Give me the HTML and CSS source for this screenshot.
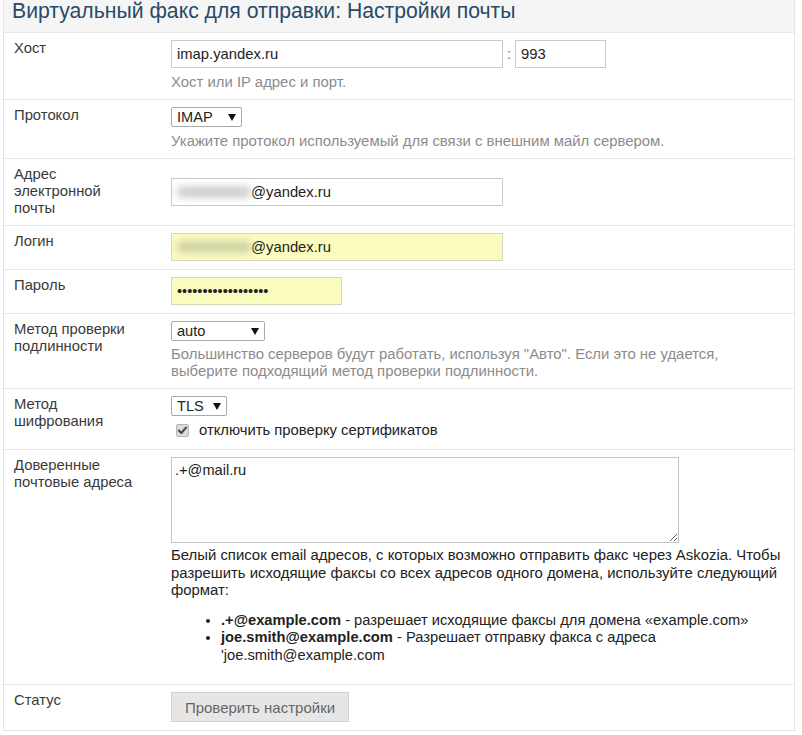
FILE: index.html
```html
<!DOCTYPE html>
<html lang="ru">
<head>
<meta charset="utf-8">
<title>Настройки почты</title>
<link rel="stylesheet" href="styles.css">
</head>
<body>
<div class="panel">
  <h2 class="panel-title">Виртуальный факс для отправки: Настройки почты</h2>

  <div class="row">
    <div class="label">Хост</div>
    <div class="field">
      <div class="inline">
        <input class="text host" type="text" value="imap.yandex.ru">
        <span class="colon">:</span>
        <input class="text port" type="text" value="993">
      </div>
      <div class="help">Хост или IP адрес и порт.</div>
    </div>
  </div>

  <div class="row">
    <div class="label">Протокол</div>
    <div class="field">
      <span class="select sel-imap"><select><option>IMAP</option></select></span>
      <div class="help">Укажите протокол используемый для связи с внешним майл сервером.</div>
    </div>
  </div>

  <div class="row">
    <div class="label">Адрес электронной почты</div>
    <div class="field">
      <div class="text fake host"><span class="blur" aria-hidden="true"></span>@yandex.ru</div>
    </div>
  </div>

  <div class="row">
    <div class="label">Логин</div>
    <div class="field">
      <div class="text fake host autofill"><span class="blur" aria-hidden="true"></span>@yandex.ru</div>
    </div>
  </div>

  <div class="row">
    <div class="label">Пароль</div>
    <div class="field">
      <input class="text pass autofill" type="password" value="abcdefghijklmnopqr">
    </div>
  </div>

  <div class="row">
    <div class="label">Метод проверки подлинности</div>
    <div class="field">
      <span class="select sel-auto"><select><option>auto</option></select></span>
      <div class="help tight">Большинство серверов будут работать, используя "Авто". Если это не удается, выберите подходящий метод проверки подлинности.</div>
    </div>
  </div>

  <div class="row">
    <div class="label">Метод шифрования</div>
    <div class="field">
      <span class="select sel-tls"><select><option>TLS</option></select></span>
      <label class="check">
        <span class="box"><svg width="11" height="11" viewBox="0 0 11 11"><path d="M2 5.6 L4.4 8 L9 2.6" fill="none" stroke="#4a4a4a" stroke-width="2.2" stroke-linecap="round" stroke-linejoin="round"/></svg></span>
        отключить проверку сертификатов
      </label>
    </div>
  </div>

  <div class="row">
    <div class="label">Доверенные почтовые адреса</div>
    <div class="field">
      <textarea class="area">.+@mail.ru</textarea>
      <div class="note">Белый список email адресов, с которых возможно отправить факс через Askozia. Чтобы разрешить исходящие факсы со всех адресов одного домена, используйте следующий формат:</div>
      <ul class="formats">
        <li><b>.+@example.com</b> - разрешает исходящие факсы для домена «example.com»</li>
        <li><b>joe.smith@example.com</b> - Разрешает отправку факса с адреса 'joe.smith@example.com</li>
      </ul>
    </div>
  </div>

  <div class="row">
    <div class="label">Статус</div>
    <div class="field">
      <button class="btn" type="button">Проверить настройки</button>
    </div>
  </div>
</div>
</body>
</html>
```

FILE: styles.css
```css
html, body {
  margin: 0;
  padding: 0;
  background: #fff;
}

body {
  font-family: "Liberation Sans", Arial, sans-serif;
  font-size: 14.8px;
  color: #333;
}

.panel {
  width: 790px;
  margin-left: 3px;
  border: 1px solid #e4e4e4;
  border-top: none;
}

.panel-title {
  margin: 0;
  height: 32px;
  box-sizing: border-box;
  padding: 0 0 0 8px;
  background: #f5f5f5;
  font-weight: normal;
  font-size: 21.2px;
  line-height: 22px;
  color: #284a68;
}

.row {
  display: grid;
  grid-template-columns: 167px 1fr;
  border-top: 1px solid #e8e8e8;
}

.label {
  padding: 7px 32px 8px 10px;
  line-height: 17px;
  color: #3a3a3a;
}

.field {
  padding: 7px 10px 8px 0;
  align-self: center;
  line-height: 18px;
}

.inline {
  display: flex;
  align-items: center;
}

.text {
  box-sizing: border-box;
  height: 28px;
  border: 1px solid #cacaca;
  background: #fff;
  font-family: "Liberation Sans", Arial, sans-serif;
  font-size: 14.8px;
  color: #222;
  padding: 0 5px;
  margin: 0;
  outline: none;
  border-radius: 0;
}

.host { width: 332px; }
.port { width: 91px; }
.pass { width: 171px; font-size: 14.5px; }

.fake {
  display: flex;
  align-items: center;
}

.autofill {
  background: #fafbbf;
  border-color: #d6d6c0;
}

.blur {
  display: block;
  width: 74px;
  height: 12px;
  background: #d0d0d0;
  filter: blur(3.5px);
  border-radius: 5px;
}

.autofill .blur {
  background: #d2d3a6;
}

.colon {
  width: 12px;
  text-align: center;
  color: #777;
}

.help {
  margin-top: 5px;
  color: #8c8c8c;
  font-size: 14.9px;
  line-height: 18px;
}

.help.tight {
  line-height: 17px;
}

.select {
  position: relative;
  display: inline-block;
  vertical-align: top;
}

.select select {
  appearance: none;
  -webkit-appearance: none;
  box-sizing: border-box;
  height: 20px;
  border: 1px solid #a9a9a9;
  border-radius: 2px;
  background: #fff;
  font-family: "Liberation Sans", Arial, sans-serif;
  font-size: 14.6px;
  color: #222;
  padding: 0 0 0 5px;
  margin: 0;
  display: block;
}

.select::after {
  content: "";
  position: absolute;
  top: 7px;
  width: 0;
  height: 0;
  border-left: 4px solid transparent;
  border-right: 4px solid transparent;
  border-top: 7px solid #111;
  pointer-events: none;
}

.sel-imap select { width: 71px; }
.sel-imap::after { left: 57px; }
.sel-auto select { width: 94px; }
.sel-auto::after { left: 80px; }
.sel-tls select { width: 56px; }
.sel-tls::after { left: 42px; }

.check {
  display: flex;
  align-items: center;
  height: 22px;
  margin-top: 3px;
  padding-left: 5px;
  color: #222;
  font-size: 14.8px;
}

.box {
  box-sizing: border-box;
  width: 13px;
  height: 13px;
  border: 1px solid #b4b4b4;
  border-radius: 2px;
  background: #dcdcdc;
  margin-right: 10px;
  display: flex;
  align-items: center;
  justify-content: center;
}

.area {
  display: block;
  box-sizing: border-box;
  width: 508px;
  height: 86px;
  border: 1px solid #c4c4c4;
  font-family: "Liberation Sans", Arial, sans-serif;
  font-size: 14.6px;
  color: #222;
  padding: 4px 3px;
  margin: 0;
  outline: none;
}

.note {
  margin-top: 4px;
  font-size: 14.9px;
  line-height: 17.5px;
  color: #222;
}

.formats {
  margin: 12px 0;
  padding-left: 50px;
  font-size: 14.7px;
  line-height: 17.5px;
  color: #222;
}

.btn {
  box-sizing: border-box;
  height: 30px;
  width: 178px;
  border: 1px solid #d2d2d2;
  border-radius: 0;
  background: #e6e6e6;
  font-family: "Liberation Sans", Arial, sans-serif;
  font-size: 15px;
  color: #666;
  padding: 0;
  display: block;
}
```
